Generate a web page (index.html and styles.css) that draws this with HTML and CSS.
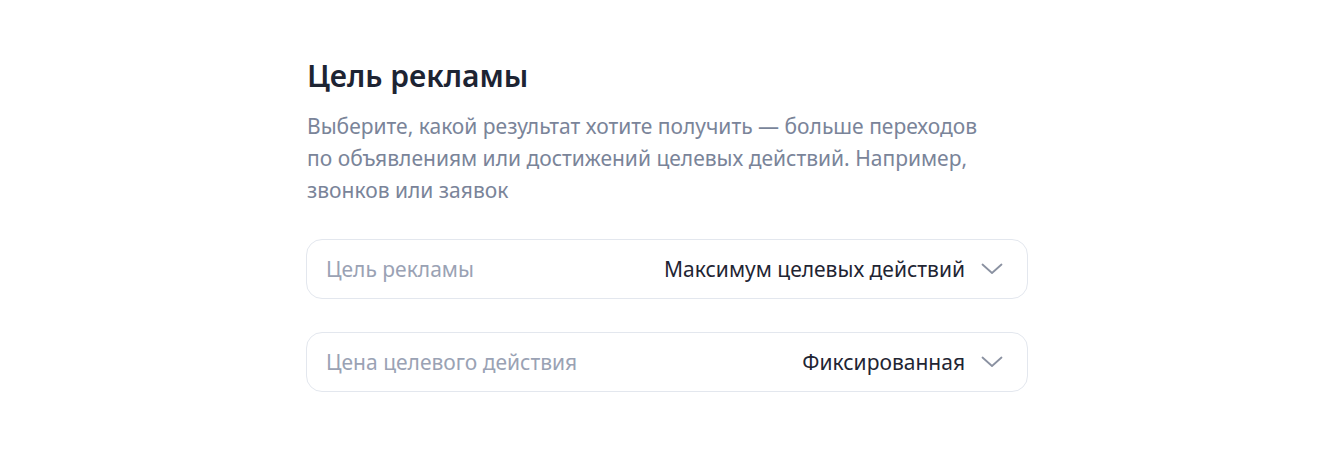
FILE: index.html
```html
<!DOCTYPE html>
<html lang="ru">
<head>
<meta charset="utf-8">
<link rel="stylesheet" href="styles.css">
</head>
<body>
<main class="page">
  <section class="goal">
    <h1 class="goal__title">Цель рекламы</h1>
    <p class="goal__desc">Выберите, какой результат хотите получить — больше переходов<br>по объявлениям или достижений целевых действий. Например,<br>звонков или заявок</p>
    <div class="fields">
      <div class="field">
        <span class="field__label">Цель рекламы</span>
        <span class="field__value">Максимум целевых действий</span>
        <svg class="field__chevron" width="22" height="12" viewBox="0 0 22 12"><path d="M1.5 1.5 L11 10 L20.5 1.5" fill="none" stroke="#8a91a1" stroke-width="1.8" stroke-linecap="round" stroke-linejoin="round"/></svg>
      </div>
      <div class="field">
        <span class="field__label">Цена целевого действия</span>
        <span class="field__value">Фиксированная</span>
        <svg class="field__chevron" width="22" height="12" viewBox="0 0 22 12"><path d="M1.5 1.5 L11 10 L20.5 1.5" fill="none" stroke="#8a91a1" stroke-width="1.8" stroke-linecap="round" stroke-linejoin="round"/></svg>
      </div>
    </div>
  </section>
</main>
</body>
</html>
```

FILE: styles.css
```css
html, body {
  margin: 0;
  padding: 0;
  background: #ffffff;
}

body {
  font-family: "Noto Sans", "Open Sans", Arial, sans-serif;
  color: #1f2533;
}

.page {
  display: flex;
  justify-content: flex-start;
  padding: 57px 0 0 306px;
}

.goal {
  width: 722px;
}

.goal__title {
  margin: 0 0 0 1px;
  font-size: 30px;
  line-height: 38px;
  font-weight: 600;
  color: #1d2433;
  letter-spacing: 0;
}

.goal__desc {
  margin: 15px 0 0 1px;
  font-size: 21px;
  line-height: 32px;
  color: #7a8499;
}

.fields {
  display: flex;
  flex-direction: column;
  gap: 33px;
  margin-top: 33px;
}

.field {
  box-sizing: border-box;
  height: 60px;
  border: 1px solid #e3e7ee;
  border-radius: 16px;
  display: flex;
  align-items: center;
  padding: 0 24px 0 19px;
}

.field__label {
  font-size: 21px;
  color: #9aa2b4;
  flex: 1;
}

.field__value {
  font-size: 21px;
  color: #1f2533;
}

.field__chevron {
  margin-left: 16px;
  display: block;
}
```
